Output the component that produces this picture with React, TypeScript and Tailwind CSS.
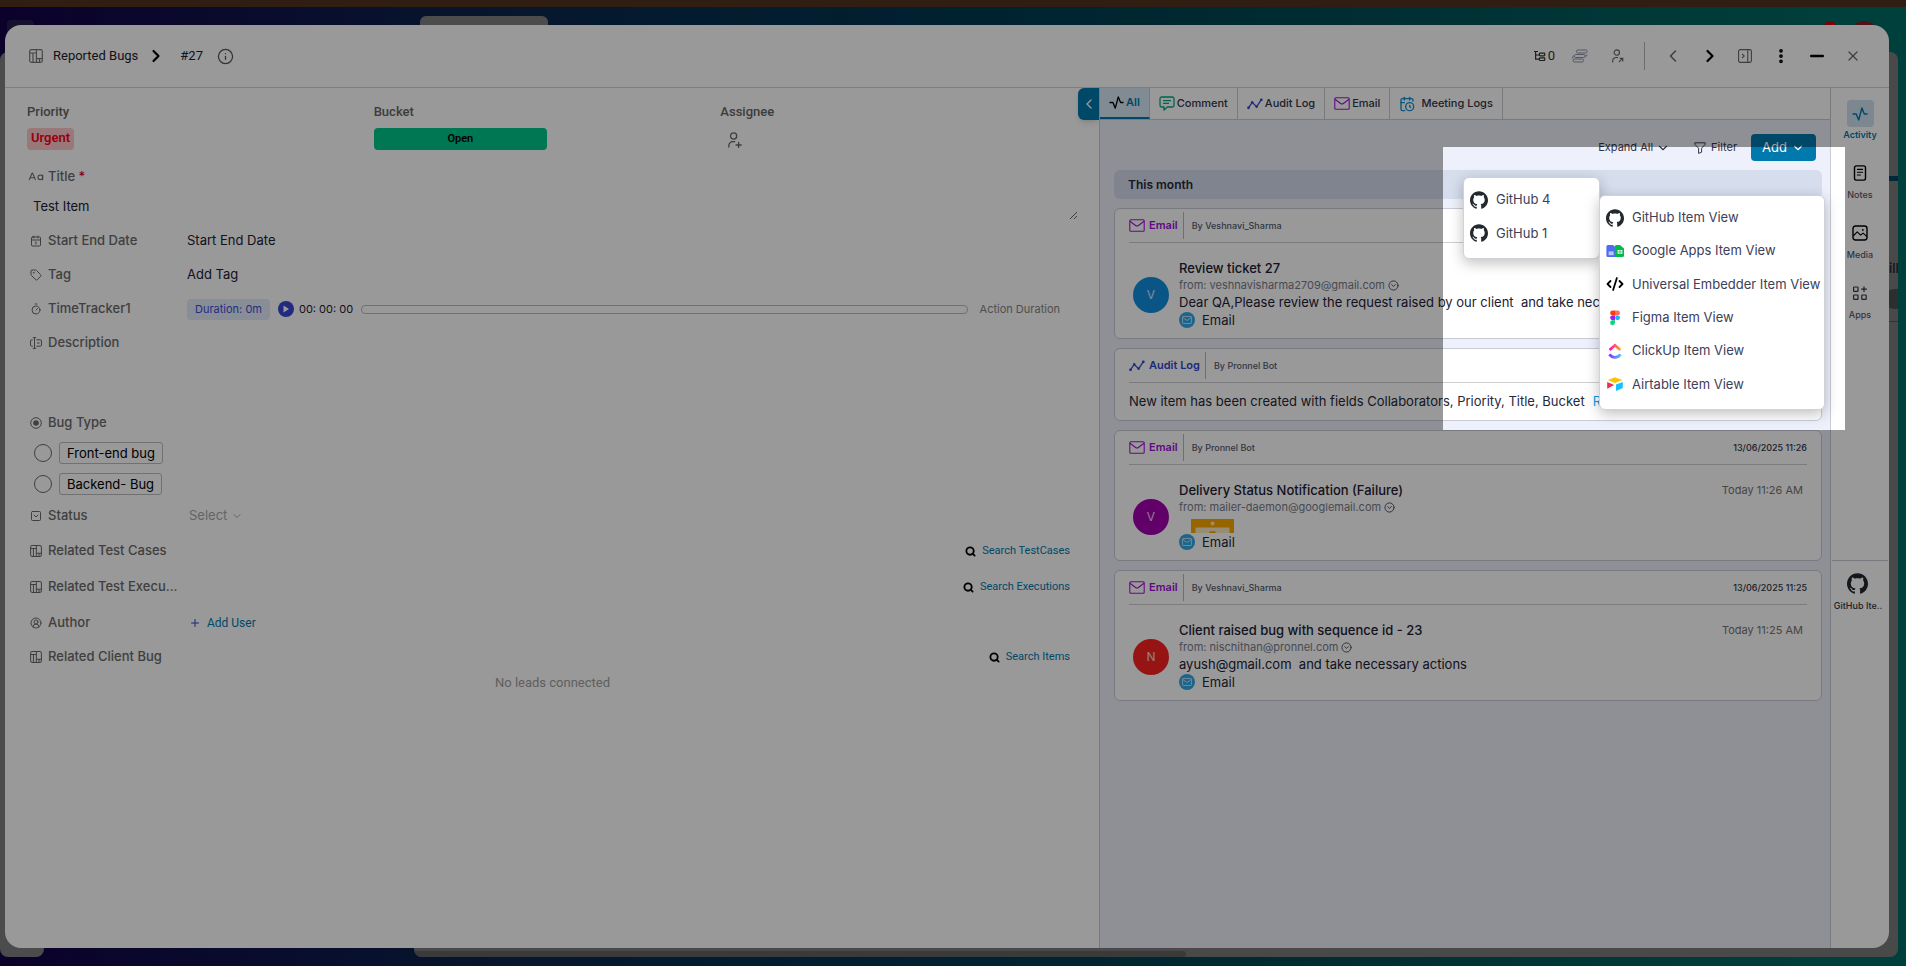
import { useId } from "react";
import type { ReactNode } from "react";
import {
  CalendarClock,
  Calendar1,
  CaseSensitive,
  ChevronDown,
  ChevronLeft,
  ChevronRight,
  CircleChevronDown,
  CircleUserRound,
  CodeXml,
  EllipsisVertical,
  Info,
  Minus,
  Plus,
  Search,
  SquareChevronDown,
  Tag,
  Timer,
  X,
} from "lucide-react";
import { SiGithub } from "react-icons/si";

type SvgProps = { className?: string };

function BoardIcon({ className }: SvgProps) {
  return (
    <svg className={className} viewBox="0 0 14 14" fill="none" stroke="currentColor" strokeWidth="1.2" aria-hidden="true">
      <rect x="0.7" y="0.7" width="12.6" height="12.6" rx="1.8" />
      <path d="M7.4 0.6v12.8M0.6 4h6.8M4 4v9.4M7.4 9.6h6M10.5 9.6v3.8" />
    </svg>
  );
}

function PulseIcon({ className }: SvgProps) {
  return (
    <svg className={className} viewBox="0 0 16 16" fill="none" stroke="currentColor" strokeWidth="1.4" strokeLinejoin="round" strokeLinecap="round" aria-hidden="true">
      <path d="M1 8h3.2l2.500 6L9.900 2l2.400 6H15" />
    </svg>
  );
}

function CursorFieldIcon({ className }: SvgProps) {
  return (
    <svg className={className} viewBox="0 0 12 12" fill="none" stroke="currentColor" strokeWidth="1" aria-hidden="true">
      <path d="M2.800 0.600h3.400M4.500 0.600v10.800M2.800 11.400h3.400" />
      <path d="M2.800 2.800H1.700a1.200 1.200 0 0 0-1.200 1.200v4a1.200 1.200 0 0 0 1.200 1.200h1.100M6.400 2.800h3.900a1.200 1.200 0 0 1 1.200 1.200v4a1.200 1.200 0 0 1-1.200 1.200H6.400M7 6h2.600" />
    </svg>
  );
}

function PersonIcon({ className, mark }: SvgProps & { mark: "plus" | "arrow" }) {
  return (
    <svg className={className} viewBox="0 0 14 16" fill="none" stroke="currentColor" strokeWidth="1.3" aria-hidden="true">
      <circle cx="5.6" cy="4" r="3.1" />
      <path d="M0.8 15.5v-1.8a4 4 0 0 1 4-4h2.4" />
      {mark === "plus" ? <path d="M10.6 10v6M7.6 13h6" /> : <path d="M8 15.2l4.4-4.4M9 10.8h3.6v3.6" />}
    </svg>
  );
}

function MailIcon({ className }: SvgProps) {
  return (
    <svg className={className} viewBox="0 0 16 13" fill="none" stroke="currentColor" strokeWidth="1.1" aria-hidden="true">
      <rect x="0.8" y="0.8" width="14.4" height="11.4" rx="1" />
      <path d="M1 2.2l5.6 4.3a2.3 2.3 0 0 0 2.8 0L15 2.2" />
    </svg>
  );
}

function TrendIcon({ className }: SvgProps) {
  return (
    <svg className={className} viewBox="0 0 16 12" fill="none" stroke="currentColor" strokeWidth="1.3" aria-hidden="true">
      <path d="M1.4 9.8L5.2 4.4l4.4 4.4 4.6-7" />
      <g fill="currentColor" stroke="none">
        <circle cx="1.5" cy="9.8" r="1.4" />
        <circle cx="5.2" cy="4.2" r="1.2" />
        <circle cx="9.6" cy="8.8" r="1.2" />
        <circle cx="14.3" cy="1.8" r="1.4" />
      </g>
    </svg>
  );
}

function CommentIcon({ className }: SvgProps) {
  return (
    <svg className={className} viewBox="0 0 16 15" fill="none" stroke="currentColor" strokeWidth="1.3" strokeLinejoin="round" aria-hidden="true">
      <path d="M2.8 1h10.4A1.8 1.8 0 0 1 15 2.8v6.4a1.8 1.8 0 0 1-1.8 1.8H8.4L5 14v-3H2.8A1.8 1.8 0 0 1 1 9.2V2.8A1.8 1.8 0 0 1 2.8 1z" />
      <path d="M4 4.7h8M4 7.4h6" />
    </svg>
  );
}

function TreeIcon({ className }: SvgProps) {
  return (
    <svg className={className} viewBox="0 0 12 12" fill="none" stroke="currentColor" strokeWidth="1.2" aria-hidden="true">
      <path d="M0 1.5h4M1.6 1.5v7.7h3.6M1.6 5h3.6" />
      <rect x="5.4" y="3.2" width="5.4" height="2.6" rx="0.8" />
      <rect x="5.4" y="7.9" width="5.4" height="2.6" rx="0.8" />
    </svg>
  );
}

function StackIcon({ className }: SvgProps) {
  return (
    <svg className={className} viewBox="0 0 16 14" fill="none" stroke="currentColor" strokeWidth="1" aria-hidden="true">
      <rect x="4.5" y="1" width="10.5" height="3" rx="1.2" />
      <rect x="2.5" y="5.5" width="10.5" height="3" rx="1.2" />
      <rect x="1" y="10" width="10.5" height="3" rx="1.2" />
      <path d="M2.5 7H1.6A1 1 0 0 0 .7 8v1.4M13 7h1a1.2 1.2 0 0 0 1.2-1.3" />
    </svg>
  );
}

function PanelIcon({ className }: SvgProps) {
  return (
    <svg className={className} viewBox="0 0 14 14" fill="none" stroke="currentColor" strokeWidth="1.1" aria-hidden="true">
      <rect x="0.6" y="0.6" width="12.8" height="12.8" rx="1.6" />
      <path d="M9.8 0.6v12.8M4 4.8L6.2 7 4 9.2" />
    </svg>
  );
}

function RadioGlyph({ className }: SvgProps) {
  return (
    <svg className={className} viewBox="0 0 12 12" aria-hidden="true">
      <circle cx="6" cy="6" r="5.3" fill="none" stroke="currentColor" />
      <circle cx="6" cy="6" r="2.8" fill="currentColor" />
    </svg>
  );
}

function FunnelIcon({ className }: SvgProps) {
  return (
    <svg className={className} viewBox="0 0 12 12" fill="none" stroke="currentColor" strokeWidth="1" strokeLinejoin="round" aria-hidden="true">
      <path d="M0.8 0.8h10.4v1.6L7.6 6.2v4L4.6 11.4V6.2L0.8 2.4z" />
    </svg>
  );
}

function NotesIcon({ className }: SvgProps) {
  return (
    <svg className={className} viewBox="0 0 16 16" fill="none" stroke="currentColor" strokeWidth="1.4" strokeLinecap="round" aria-hidden="true">
      <rect x="2.5" y="0.9" width="11" height="14.2" rx="1.8" />
      <path d="M5.4 4.4h5.2M5.4 7.2h5.2M5.4 10h3" strokeWidth="1.1" />
    </svg>
  );
}

function MediaIcon({ className }: SvgProps) {
  return (
    <svg className={className} viewBox="0 0 16 16" fill="none" stroke="currentColor" strokeWidth="1.4" strokeLinejoin="round" aria-hidden="true">
      <rect x="1" y="1" width="14" height="14" rx="2.4" />
      <path d="M1.2 11l4-4.2 3.4 3.4 2.4-2 4 3.4" strokeWidth="1.1" />
      <circle cx="10.8" cy="4.9" r="0.9" fill="currentColor" stroke="none" />
    </svg>
  );
}

function AppsIcon({ className }: SvgProps) {
  return (
    <svg className={className} viewBox="0 0 16 16" fill="none" stroke="currentColor" strokeWidth="1.2" aria-hidden="true">
      <rect x="1.6" y="2" width="4.4" height="4.4" rx="0.6" />
      <rect x="1.6" y="10" width="4.4" height="4.4" rx="0.6" />
      <rect x="9.8" y="10" width="4.4" height="4.4" rx="0.6" />
      <path d="M12 1.4v5.6M9.2 4.2h5.6" />
    </svg>
  );
}

function GoogleAppsIcon({ className }: SvgProps) {
  return (
    <svg className={className} viewBox="0 0 18 18" aria-hidden="true">
      <path d="M2 3h5l3 2.6v9.4H2a1.6 1.6 0 0 1-1.6-1.6V4.6A1.6 1.6 0 0 1 2 3z" fill="#4e6cf0" />
      <rect x="2.6" y="9.4" width="5" height="3.8" fill="#b9c6fb" />
      <path d="M10.4 3H14l4 3.4v7a1.6 1.6 0 0 1-1.6 1.6h-6A1.6 1.6 0 0 1 8.8 13.4V4.6A1.6 1.6 0 0 1 10.4 3z" fill="#06b84a" />
      <path d="M11.6 8h4.8v3.8h-4.8z" fill="#fff" />
      <path d="M11.6 9.9h4.8M14 8v3.8" stroke="#06b84a" strokeWidth="0.7" />
    </svg>
  );
}

function FigmaIcon({ className }: SvgProps) {
  return (
    <svg className={className} viewBox="0 0 18 18" aria-hidden="true">
      <path d="M9 1.5H6.6a2.4 2.4 0 0 0 0 4.9H9z" fill="#ff3a12" />
      <path d="M9 1.5h2.6a2.4 2.4 0 0 1 0 4.9H9z" fill="#ff6f61" />
      <path d="M9 6.4H6.6a2.4 2.4 0 0 0 0 4.9H9z" fill="#a01cf5" />
      <circle cx="11.6" cy="8.85" r="2.45" fill="#19b5ff" />
      <path d="M9 11.3H6.6A2.45 2.45 0 1 0 9 13.75z" fill="#0fd583" />
    </svg>
  );
}

function ClickUpIcon({ className }: SvgProps) {
  const id = useId();
  return (
    <svg className={className} viewBox="0 0 18 18" fill="none" strokeWidth="2.7" aria-hidden="true">
      <defs>
        <linearGradient id={`${id}a`} x1="3" x2="15" y1="0" y2="0" gradientUnits="userSpaceOnUse">
          <stop stopColor="#ff02c8" />
          <stop offset="1" stopColor="#ffb300" />
        </linearGradient>
        <linearGradient id={`${id}b`} x1="3" x2="15" y1="0" y2="0" gradientUnits="userSpaceOnUse">
          <stop stopColor="#8930fd" />
          <stop offset="1" stopColor="#49ccf9" />
        </linearGradient>
      </defs>
      <path d="M3.6 8L9 3.3 14.4 8" stroke={`url(#${id}a)`} />
      <path d="M3.4 12.400c3 4 8.200 4 11.200 0" stroke={`url(#${id}b)`} />
    </svg>
  );
}

function AirtableIcon({ className }: SvgProps) {
  return (
    <svg className={className} viewBox="0 0 18 18" aria-hidden="true">
      <path d="M9 2.200L16.400 5 9 8 1.800 5z" fill="#fcc400" />
      <path d="M16.800 7v6L10 16V9.600z" fill="#18bfff" />
      <path d="M1.200 7l7 3-7 3.800z" fill="#f02b50" />
    </svg>
  );
}

function MailBadge() {
  return (
    <span className="flex size-4 shrink-0 items-center justify-center rounded-full bg-[#33a8e8] text-white">
      <MailIcon className="h-2 w-2.5" />
    </span>
  );
}

const fieldIcon = "size-3 shrink-0";

function FieldLabel({ icon, children }: { icon: ReactNode; children: ReactNode }) {
  return (
    <div className="flex w-40 shrink-0 items-center gap-1.5 pl-[3px] text-[13px] font-medium text-[#6a6a6a]">
      {icon}
      <span className="min-w-0 whitespace-nowrap">{children}</span>
    </div>
  );
}

function SearchLink({ children }: { children: ReactNode }) {
  return (
    <a href="#search" className="mr-2 ml-auto flex items-center gap-1.5 font-['Roboto',sans-serif] text-[11px] text-[#0079ad]">
      <Search className="size-[11px] text-black" strokeWidth={4} />
      {children}
    </a>
  );
}

function Header() {
  return (
    <header className="flex h-[63px] shrink-0 items-center border-b border-[#d2d2d6] pr-7 pl-6 font-['Roboto',sans-serif] text-[13px]">
      <BoardIcon className="size-3.5 text-[#777]" />
      <a href="#bugs" className="ml-2.5 text-[#1d2033]">Reported Bugs</a>
      <ChevronRight className="ml-2 size-5 text-black" strokeWidth={2.6} />
      <span className="ml-3.5 text-[#1d2033]">#27</span>
      <button type="button" aria-label="Item details" className="ml-3.5">
        <Info className="size-[17px] text-[#555]" strokeWidth={1.8} />
      </button>
      <div className="ml-auto flex items-center text-[#666]">
        <button type="button" className="mr-[17px] flex items-center gap-0.5 text-[#333]">
          <TreeIcon className="size-3" />0
        </button>
        <button type="button" aria-label="Bulk view" className="mr-6 text-[#8d93a8]">
          <StackIcon className="h-3.5 w-4" />
        </button>
        <button type="button" aria-label="Share with" className="mr-5">
          <PersonIcon className="h-3.5 w-3" mark="arrow" />
        </button>
        <span className="h-7 w-px bg-[#b5b5b9]" />
        <button type="button" aria-label="Previous" className="ml-[18px]">
          <ChevronLeft className="size-5" strokeWidth={1.8} />
        </button>
        <button type="button" aria-label="Next" className="ml-[17px] text-black">
          <ChevronRight className="size-5" strokeWidth={2.6} />
        </button>
        <button type="button" aria-label="Side panel" className="ml-[18px]">
          <PanelIcon className="size-3.5" />
        </button>
        <button type="button" aria-label="More" className="ml-5 text-black">
          <EllipsisVertical className="size-[18px]" strokeWidth={3} />
        </button>
        <button type="button" aria-label="Minimize" className="ml-[17px] text-black">
          <Minus className="size-5" strokeWidth={3} />
        </button>
        <button type="button" aria-label="Close" className="ml-[18px]">
          <X className="size-4" strokeWidth={1.8} />
        </button>
      </div>
    </header>
  );
}

function BugOption({ label }: { label: string }) {
  return (
    <label className="flex h-[31px] items-center gap-[7px] pl-[7px] text-[13px] text-black">
      <input type="radio" name="bug-type" className="size-[18px] appearance-none rounded-full border border-[#6a6a6a]" />
      <span className="rounded-[3px] border border-[#bdbdc1] px-[7px] leading-5">{label}</span>
    </label>
  );
}

function ItemForm() {
  return (
    <main className="relative min-w-0 overflow-hidden pr-[21px] pl-[22px]">
      <button
        type="button"
        aria-label="Collapse panel"
        className="absolute top-0 right-0 flex h-8 w-[21px] items-center justify-center rounded-l-md bg-[#0079ad] text-white shadow-md"
      >
        <ChevronLeft className="size-4" strokeWidth={2} />
      </button>
      <div className="mr-[11px] grid h-[76px] grid-cols-3 pt-3.5 font-['Roboto',sans-serif] text-[13px] font-medium text-[#666]">
        <div>
          <div className="leading-5">Priority</div>
          <span className="mt-1.5 inline-block h-[22px] rounded bg-[#ffc9cc] px-1 leading-5 font-semibold text-[#f80014]">Urgent</span>
        </div>
        <div>
          <div className="leading-5">Bucket</div>
          <button type="button" className="mt-1.5 block h-[22px] w-1/2 rounded bg-[#00c78b] text-[11px] font-semibold text-black">Open</button>
        </div>
        <div>
          <div className="leading-5">Assignee</div>
          <button type="button" aria-label="Add assignee" className="mt-2.5 ml-2 block">
            <PersonIcon className="h-4 w-3.5" mark="plus" />
          </button>
        </div>
      </div>

      <div className="flex h-6 items-center pt-px">
        <FieldLabel icon={<CaseSensitive className="-mx-0.5 size-4 shrink-0" strokeWidth={1.6} />}>
          Title <span className="text-[#e8000f]">*</span>
        </FieldLabel>
      </div>
      <textarea
        aria-label="Title"
        defaultValue="Test Item"
        className="block h-8 w-full resize-y px-1.5 pt-2 text-[13px] leading-5 text-[#1d2033]"
      />

      <div className="mt-1 flex h-[34px] items-center">
        <FieldLabel icon={<Calendar1 className={fieldIcon} />}>Start End Date</FieldLabel>
        <span className="text-[13px] text-[#1d2033]">Start End Date</span>
      </div>
      <div className="flex h-[34px] items-center">
        <FieldLabel icon={<Tag className={fieldIcon} />}>Tag</FieldLabel>
        <span className="text-[13px] text-[#1d2033]">Add Tag</span>
      </div>
      <div className="flex h-[34px] items-center">
        <FieldLabel icon={<Timer className={fieldIcon} />}>TimeTracker1</FieldLabel>
        <span className="flex h-[21px] items-center rounded bg-[#e4ebfb] px-2 text-[11px] text-[#3b4fd6]">Duration: 0m</span>
        <button type="button" aria-label="Start timer" className="ml-2 flex size-4 items-center justify-center rounded-full bg-[#3846d2]">
          <svg className="size-2" viewBox="0 0 8 8" aria-hidden="true"><path d="M1.500 0.500L7 4 1.500 7.500z" fill="#fff" /></svg>
        </button>
        <span className="ml-[5px] text-[11px] text-[#1d2033]">00: 00: 00</span>
        <span className="ml-2 h-[9px] flex-1 rounded border border-[#bdbdc1]" />
        <span className="mr-[18px] ml-3 text-[11px] text-[#858585]">Action Duration</span>
      </div>
      <div className="flex h-[34px] items-center">
        <FieldLabel icon={<CursorFieldIcon className={fieldIcon} />}>Description</FieldLabel>
      </div>
      <div className="mt-12 flex h-[29px] items-center">
        <FieldLabel icon={<RadioGlyph className={fieldIcon} />}>Bug Type</FieldLabel>
      </div>
      <BugOption label="Front-end bug" />
      <BugOption label="Backend- Bug" />
      <div className="flex h-[34px] items-center">
        <FieldLabel icon={<SquareChevronDown className={fieldIcon} />}>Status</FieldLabel>
        <button type="button" className="flex items-center gap-1 pl-0.5 text-[13px] text-[#a8a8a8]">
          Select <ChevronDown className="size-3" />
        </button>
      </div>
      <div className="flex h-9 items-center">
        <FieldLabel icon={<BoardIcon className={fieldIcon} />}>Related Test Cases</FieldLabel>
        <SearchLink>Search TestCases</SearchLink>
      </div>
      <div className="flex h-9 items-center">
        <FieldLabel icon={<BoardIcon className={fieldIcon} />}>Related Test Execu...</FieldLabel>
        <SearchLink>Search Executions</SearchLink>
      </div>
      <div className="flex h-9 items-center">
        <FieldLabel icon={<CircleUserRound className={fieldIcon} />}>Author</FieldLabel>
        <button type="button" className="flex items-center gap-1.5 pl-0.5 font-['Roboto',sans-serif] text-xs text-[#0079ad]">
          <Plus className="size-3 text-[#3040c8]" /> Add User
        </button>
      </div>
      <div className="flex h-8 items-center">
        <FieldLabel icon={<BoardIcon className={fieldIcon} />}>Related Client Bug</FieldLabel>
        <SearchLink>Search Items</SearchLink>
      </div>
      <p className="text-center font-['Roboto',sans-serif] text-[13px] leading-5 text-[#a0a0a0]">No leads connected</p>
    </main>
  );
}

const tabClass = "flex items-center border-r border-[#c9cbd6] px-[9px] text-[11px] font-medium text-[#33364a]";

function Tabs() {
  return (
    <nav className="flex h-8 shrink-0 border-b border-[#c9cbd6] bg-white">
      <button type="button" className="flex items-center gap-0.5 border-r border-b-2 border-r-[#c9cbd6] border-b-[#0079ad] bg-[#d8e8f5] px-[9px] text-[11px] font-semibold text-[#0079ad]">
        <PulseIcon className="size-[15px] text-black" /> All
      </button>
      <button type="button" className={`${tabClass} gap-0.5`}>
        <CommentIcon className="h-[15px] w-4 text-[#00a884]" /> Comment
      </button>
      <button type="button" className={`${tabClass} gap-0.5`}>
        <TrendIcon className="h-3 w-4 text-[#3348d0]" /> Audit Log
      </button>
      <button type="button" className={`${tabClass} gap-0.5`}>
        <MailIcon className="h-[13px] w-4 text-[#a213d8]" /> Email
      </button>
      <button type="button" className={`${tabClass} gap-1.5`}>
        <CalendarClock className="size-4 text-[#118ed8]" /> Meeting Logs
      </button>
    </nav>
  );
}

function LogCard({ kind, by, date, children }: { kind: "Email" | "Audit Log"; by: string; date?: string; children: ReactNode }) {
  const isEmail = kind === "Email";
  return (
    <article className="rounded-md border border-[#c9cbd6] bg-white px-3.5">
      <div className="flex h-[34px] items-center border-b border-[#cfcfd3]">
        <span className={isEmail ? "flex items-center gap-1 text-[11px] font-semibold text-[#a213d8]" : "flex items-center gap-1 text-[11px] font-semibold text-[#3348d0]"}>
          {isEmail ? <MailIcon className="h-[13px] w-4" /> : <TrendIcon className="h-3 w-4" />}
          {kind}
        </span>
        <span className="mr-2 ml-[5px] h-[27px] w-px bg-[#b9b9bd]" />
        <span className="text-[9px] font-medium text-[#555a6e]">{by}</span>
        {date && <time className="ml-auto text-[9px] font-medium text-[#33364a]">{date}</time>}
      </div>
      {children}
    </article>
  );
}

type MailProps = { initial: string; tone: string; title: string; from: string; time?: string; children: ReactNode };

function MailBody({ initial, tone, title, from, time, children }: MailProps) {
  return (
    <div className="flex h-[95px] items-center gap-2.5 pl-1">
      <span className={`mt-2 flex size-9 shrink-0 items-center justify-center rounded-full text-xs text-white/80 ${tone}`}>{initial}</span>
      <div className="min-w-0 flex-1 text-[13px] leading-[18px] text-[#1d2033]">
        <div className="flex justify-between pr-1 pt-[7px]">
          <h3 className="font-medium">{title}</h3>
          <time className="text-[11px] leading-[18px] text-[#747474]">{time}</time>
        </div>
        <div className="flex items-center gap-[3px] text-[11px] leading-[16px] text-[#777c8c]">
          from: {from}
          <CircleChevronDown className="size-[11px] text-[#44485c]" />
        </div>
        {children}
        <div className="flex items-center gap-[7px] text-[#26283a]">
          <MailBadge /> Email
        </div>
      </div>
    </div>
  );
}

function ActivityPanel() {
  return (
    <section className="flex min-w-0 flex-col border-l border-[#c9cbd6] bg-[#eef1fb]">
      <Tabs />
      <div className="flex flex-col gap-[9px] px-3.5 pr-2">
        <div className="flex h-[41px] items-center justify-end pt-3.5 pr-1.5 text-[11px] text-[#33364a]">
          <button type="button" className="flex items-center gap-[3px]">
            Expand All <ChevronDown className="size-3.5" />
          </button>
          <button type="button" className="mr-3.5 ml-6 flex items-center gap-[5px]">
            <FunnelIcon className="size-3" /> Filter
          </button>
          <button type="button" className="flex h-[27px] items-center gap-1 rounded bg-[#0079ad] px-[11px] text-[13px] text-white">
            Add <ChevronDown className="size-3.5" />
          </button>
        </div>
        <h2 className="flex h-[29px] items-center rounded-md bg-[#d6dded] px-3.5 text-xs font-semibold text-[#26283a]">This month</h2>
        <LogCard kind="Email" by="By Veshnavi_Sharma">
          <MailBody initial="V" tone="bg-[#0f90e0]" title="Review ticket 27" from="veshnavisharma2709@gmail.com">
            <p className="truncate whitespace-pre">{"Dear QA,Please review the request raised by our client  and take necessary actions"}</p>
          </MailBody>
        </LogCard>
        <LogCard kind="Audit Log" by="By Pronnel Bot">
          <p className="flex h-[37px] items-center text-[13px] text-[#26283a]">
            New item has been created with fields Collaborators, Priority, Title, Bucket
            <a href="#more" className="ml-2 text-[#0d9be0]">Read More</a>
          </p>
        </LogCard>
        <LogCard kind="Email" by="By Pronnel Bot" date="13/06/2025 11:26">
          <MailBody initial="V" tone="bg-[#a000ae]" title="Delivery Status Notification (Failure)" from="mailer-daemon@googlemail.com" time="Today 11:26 AM">
            <svg className="mt-1 ml-3 block h-3.5 w-[43px]" viewBox="0 0 43 14" role="img" aria-label="Attachment preview">
              <path d="M0 0h43v14H0z" fill="#fba900" />
              <path d="M4.500 8.500h34V14h-34z" fill="#ffe9c2" />
              <circle cx="21.500" cy="4.500" r="2" fill="#ffe9c2" />
              <path d="M18 14a3.500 2 0 0 1 7 0z" fill="#fba900" />
            </svg>
          </MailBody>
        </LogCard>
        <LogCard kind="Email" by="By Veshnavi_Sharma" date="13/06/2025 11:25">
          <MailBody initial="N" tone="bg-[#fa2222]" title="Client raised bug with sequence id - 23" from="nischithan@pronnel.com" time="Today 11:25 AM">
            <p className="whitespace-pre">{"ayush@gmail.com  and take necessary actions"}</p>
          </MailBody>
        </LogCard>
      </div>
    </section>
  );
}

function Rail() {
  return (
    <aside className="flex flex-col items-center border-l border-[#c9cbd6] text-[9px] leading-4 font-medium text-[#55586a]">
      <button type="button" className="mt-3 flex h-[60px] flex-col items-center text-[#0079ad]">
        <span className="flex size-[27px] items-center justify-center rounded bg-[#cfe1ee]">
          <PulseIcon className="size-4" />
        </span>
        <span className="font-semibold">Activity</span>
      </button>
      <button type="button" className="flex h-[60px] flex-col items-center gap-1.5 pt-[5px]">
        <NotesIcon className="size-4 text-black" /> Notes
      </button>
      <button type="button" className="flex h-[60px] flex-col items-center gap-1.5 pt-[5px]">
        <MediaIcon className="size-4 text-black" /> Media
      </button>
      <button type="button" className="flex h-[60px] flex-col items-center gap-1.5 pt-[5px]">
        <AppsIcon className="size-4 text-[#33364a]" /> Apps
      </button>
      <div className="mt-[220px] flex w-full flex-col items-center px-px">
        <span className="h-px w-full bg-[#c9cbd6]" />
        <button type="button" className="mt-3 mr-1 flex flex-col items-center gap-1 text-[#33364a]">
          <SiGithub className="size-[21px] text-[#24292e]" />
          GitHub Ite..
        </button>
      </div>
    </aside>
  );
}

const menuClass = "absolute rounded-md border border-[#d0d2d8] bg-white pt-[5px] pb-2 text-[13px] text-[#3c4058] shadow-[0_4px_14px_rgba(0,0,0,0.25)]";

function MenuItem({ icon, children }: { icon: ReactNode; children: ReactNode }) {
  return (
    <button type="button" role="menuitem" className="flex items-center gap-2 pl-1.5 text-left whitespace-nowrap">
      {icon}
      {children}
    </button>
  );
}

function Backdrop() {
  return (
    <div className="absolute inset-0 flex flex-col bg-[#533221] pt-[7px]" aria-hidden="true">
      <div className="relative flex-1 bg-[linear-gradient(90deg,#140249_0%,#0a284d_28%,#023550_47%,#004953_68%,#006b64_97%)]">
        <div className="absolute top-[13px] left-[7px] h-5 w-[27px] rounded bg-[#251d4d]" />
        <div className="absolute top-[9px] left-[420px] h-6 w-32 rounded-md bg-[#7f7f7f]" />
        <div className="absolute top-[14px] right-[70px] size-3 rounded-full bg-[#d00010]" />
        <div className="absolute top-[14px] right-[28px] size-7 rounded-full bg-[#8e1c20]" />
        <div className="absolute top-[45px] bottom-[9px] left-0 w-11 rounded-tl-lg rounded-b-lg bg-[#7f7f7f]" />
        <div className="absolute top-[45px] right-2 bottom-[9px] left-[414px] flex flex-col items-end overflow-hidden rounded-lg bg-[#7a7a7a]">
          <div className="mt-[124px] h-[5px] w-10 bg-[#004463]" />
          <div className="flex h-24 w-[9px] items-center text-[13px] font-medium text-[#1d2033]">
            <span className="pt-20">ill</span>
          </div>
          <div className="mt-3 h-5 w-3.5 rounded-l-full bg-[#46504e]" />
          <div className="mt-3 h-px w-[9px] bg-[#555]" />
          <div className="mt-auto h-1.5 w-[772px] self-start rounded-r bg-[#626262]" />
        </div>
      </div>
    </div>
  );
}

export default function App() {
  return (
    <div className="relative h-screen overflow-hidden pt-[25px] pr-[17px] pb-[18px] pl-[5px] font-['Inter',sans-serif]">
      <Backdrop />
      <div role="dialog" aria-label="Reported Bugs #27" className="relative flex h-full flex-col overflow-hidden rounded-2xl bg-white">
        <Header />
        <div className="grid min-h-0 flex-1 grid-cols-[minmax(0,1fr)_731px_59px]">
          <ItemForm />
          <ActivityPanel />
          <Rail />
        </div>
      </div>
      <div className={`${menuClass} top-[177px] right-[306px] grid h-[82px] w-[137px] grid-rows-2`} role="menu" aria-label="GitHub">
        <MenuItem icon={<SiGithub className="size-[18px] text-[#24292e]" />}>GitHub 4</MenuItem>
        <MenuItem icon={<SiGithub className="size-[18px] text-[#24292e]" />}>GitHub 1</MenuItem>
      </div>
      <div className={`${menuClass} top-[195px] right-[81px] grid h-[215px] w-[226px] grid-rows-6`} role="menu" aria-label="Add">
        <MenuItem icon={<SiGithub className="size-[18px] text-[#24292e]" />}>GitHub Item View</MenuItem>
        <MenuItem icon={<GoogleAppsIcon className="size-[18px]" />}>Google Apps Item View</MenuItem>
        <MenuItem icon={<CodeXml className="size-[18px] text-black" strokeWidth={2.4} />}>Universal Embedder Item View</MenuItem>
        <MenuItem icon={<FigmaIcon className="size-[18px]" />}>Figma Item View</MenuItem>
        <MenuItem icon={<ClickUpIcon className="size-[18px]" />}>ClickUp Item View</MenuItem>
        <MenuItem icon={<AirtableIcon className="size-[18px]" />}>Airtable Item View</MenuItem>
      </div>
      <div className="pointer-events-none absolute top-[147px] right-[61px] h-[283px] w-[402px] shadow-[0_0_0_9999px_rgba(0,0,0,0.4)]" />
    </div>
  );
}
